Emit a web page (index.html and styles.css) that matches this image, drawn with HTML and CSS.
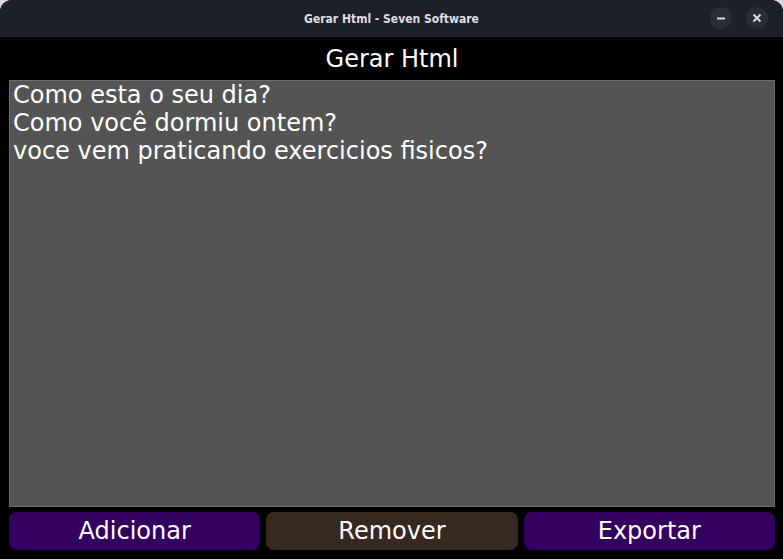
FILE: index.html
```html
<!DOCTYPE html>
<html lang="pt">
<head>
<meta charset="utf-8">
<title>Gerar Html - Seven Software</title>
<link rel="stylesheet" href="styles.css">
</head>
<body>
<div class="window">
  <header class="titlebar">
    <span class="title">Gerar Html - Seven Software</span>
    <div class="controls">
      <button class="ctl" aria-label="Minimizar">
        <svg width="10" height="10" viewBox="0 0 10 10"><path d="M1 5.5h8" stroke="#d8d8dc" stroke-width="2"/></svg>
      </button>
      <button class="ctl" aria-label="Fechar">
        <svg width="10" height="10" viewBox="0 0 10 10"><path d="M1.5 1.5l7 7M8.5 1.5l-7 7" stroke="#d8d8dc" stroke-width="2"/></svg>
      </button>
    </div>
  </header>
  <main class="content">
    <h1 class="heading">Gerar Html</h1>
    <div class="editor">Como esta o seu dia?
Como você dormiu ontem?
voce vem praticando exercicios fisicos?</div>
    <div class="actions">
      <button class="btn btn-purple">Adicionar</button>
      <button class="btn btn-brown">Remover</button>
      <button class="btn btn-purple">Exportar</button>
    </div>
  </main>
</div>
</body>
</html>
```
FILE: styles.css
```css
html, body {
  margin: 0;
  padding: 0;
  height: 100%;
}
body {
  background: #d9d9d9;
  font-family: "DejaVu Sans", sans-serif;
}
.window {
  height: 559px;
  display: flex;
  flex-direction: column;
  background: #000;
  border-radius: 12px 12px 0 0;
  overflow: hidden;
}
.titlebar {
  height: 37px;
  flex: none;
  background: #1e2028;
  position: relative;
  display: flex;
  align-items: center;
  justify-content: center;
}
.title {
  color: #dedee2;
  font-family: "DejaVu Sans Condensed", "DejaVu Sans", sans-serif;
  font-weight: bold;
  font-size: 12px;
}
.controls {
  position: absolute;
  right: 15px;
  top: 7px;
  display: flex;
  gap: 14px;
}
.ctl {
  width: 22px;
  height: 22px;
  border-radius: 50%;
  border: none;
  padding: 0;
  background: #2b2d35;
  display: flex;
  align-items: center;
  justify-content: center;
}
.content {
  flex: 1;
  display: flex;
  flex-direction: column;
  padding: 0 8px 9px 9px;
}
.heading {
  margin: 0;
  height: 43px;
  line-height: 45px;
  text-align: center;
  color: #fff;
  font-weight: normal;
  font-size: 24px;
}
.editor {
  flex: 1;
  background: #545454;
  border: 1px solid #6e6e6e;
  color: #fff;
  font-size: 24px;
  line-height: 28px;
  padding: 0 3px;
  white-space: pre-wrap;
}
.actions {
  display: grid;
  grid-template-columns: 1fr 1fr 1fr;
  gap: 6px;
  margin-top: 5px;
  height: 38px;
}
.btn {
  border: none;
  border-radius: 8px;
  color: #fff;
  font-family: "DejaVu Sans", sans-serif;
  font-size: 24px;
  padding: 0;
  line-height: 38px;
}
.btn-purple { background: #34005f; }
.btn-brown { background: #372820; }
```
